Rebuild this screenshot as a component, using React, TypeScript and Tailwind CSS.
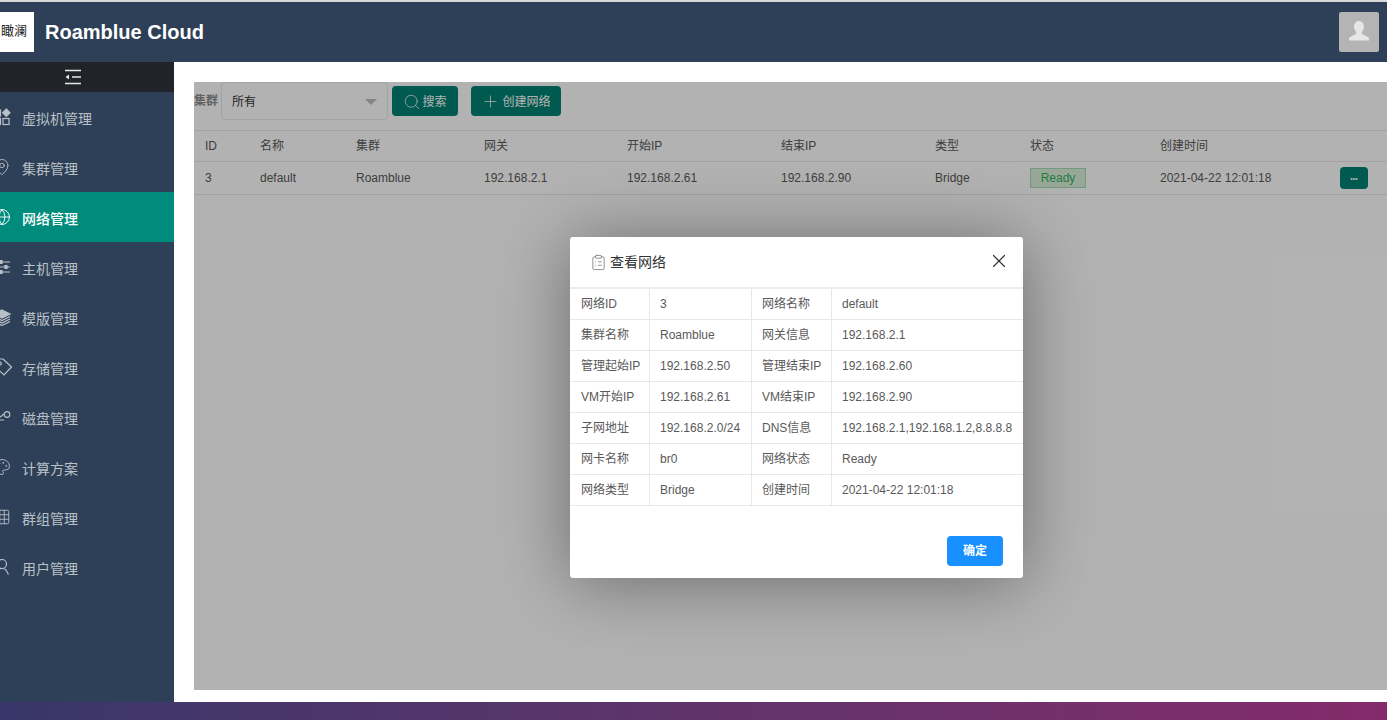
import { Globe, MapPin, Plus, Search, Palette, Grid3x3, X, ClipboardList } from "lucide-react";

const font = "font-['Liberation_Sans','Noto_Sans_CJK_SC',sans-serif]";

const AppsIcon = () => (
  <svg width="18" height="18" viewBox="0 0 18 18" fill="none" stroke="currentColor" strokeWidth="1.2">
    <rect x="1.500" y="2" width="6" height="6" />
    <rect x="1.500" y="10.500" width="6" height="6" />
    <rect x="10" y="10.500" width="6" height="6" />
    <path d="M13.300 1l3.700 3.700-3.700 3.700-3.700-3.700z" fill="currentColor" />
  </svg>
);

const HostIcon = () => (
  <svg width="18" height="18" viewBox="0 0 18 18" fill="none" stroke="currentColor" strokeWidth="1.2">
    <path d="M1 4h16M1 9h16M1 14h16" />
    <path d="M7 2.500h2v3H7zM12 7.500h2v3h-2zM7 12.500h2v3H7z" fill="currentColor" />
  </svg>
);

const DiskIcon = () => (
  <svg width="18" height="18" viewBox="0 0 18 18" fill="none" stroke="currentColor" strokeWidth="1.2">
    <path d="M1 6c2 0 3 3 5.500 3s2.500-2.500 4.500-3" />
    <circle cx="14" cy="6.500" r="2.800" />
    <path d="M1 12h3M7 12h4" />
  </svg>
);

const StackIcon = () => (
  <svg width="18" height="18" viewBox="0 0 18 18" fill="none" stroke="currentColor" strokeWidth="1.2">
    <path d="M9 2l8 4-8 4-8-4z" fill="currentColor" />
    <path d="M1 8.500l8 4 8-4M1 11l8 4 8-4M1 13.500l8 4 8-4" />
  </svg>
);

const TagIcon = () => (
  <svg width="18" height="18" viewBox="0 0 18 18" fill="none" stroke="currentColor" strokeWidth="1.2" className="overflow-visible">
    <path d="M10 1l8.500 8-7.500 8-9-8.500V1z" />
    <circle cx="7" cy="5.500" r="1.300" />
  </svg>
);

const UserIcon = () => (
  <svg width="18" height="18" viewBox="0 0 18 18" fill="none" stroke="currentColor" strokeWidth="1.2">
    <circle cx="9" cy="6" r="4.500" />
    <path d="M2 16c0-3 2.500-5.500 7-5.500 1.500 0 3 .5 4 1.500l2.500 4.500" />
  </svg>
);

const Icon = ({ name }: { name: string }) => {
  const props = { size: 18, strokeWidth: 1.2 };
  if (name === "apps") return <AppsIcon />;
  if (name === "pin") return <MapPin size={20} strokeWidth={1.2} />;
  if (name === "globe") return <Globe {...props} />;
  if (name === "host") return <HostIcon />;
  if (name === "layers") return <StackIcon />;
  if (name === "tag") return <TagIcon />;
  if (name === "disk") return <DiskIcon />;
  if (name === "palette") return <Palette {...props} />;
  if (name === "grid") return <Grid3x3 {...props} />;
  return <UserIcon />;
};

const menu = [
  { label: "虚拟机管理", icon: "apps" },
  { label: "集群管理", icon: "pin" },
  { label: "网络管理", icon: "globe", active: true },
  { label: "主机管理", icon: "host" },
  { label: "模版管理", icon: "layers" },
  { label: "存储管理", icon: "tag" },
  { label: "磁盘管理", icon: "disk" },
  { label: "计算方案", icon: "palette" },
  { label: "群组管理", icon: "grid" },
  { label: "用户管理", icon: "user" },
];

const headers = ["ID", "名称", "集群", "网关", "开始IP", "结束IP", "类型", "状态", "创建时间"];
const cols = "grid grid-cols-[55px_96px_128px_143px_154px_154px_95px_130px_1fr]";

const details = [
  ["网络ID", "3", "网络名称", "default"],
  ["集群名称", "Roamblue", "网关信息", "192.168.2.1"],
  ["管理起始IP", "192.168.2.50", "管理结束IP", "192.168.2.60"],
  ["VM开始IP", "192.168.2.61", "VM结束IP", "192.168.2.90"],
  ["子网地址", "192.168.2.0/24", "DNS信息", "192.168.2.1,192.168.1.2,8.8.8.8"],
  ["网卡名称", "br0", "网络状态", "Ready"],
  ["网络类型", "Bridge", "创建时间", "2021-04-22 12:01:18"],
];

const Sidebar = () => (
  <aside className="w-[174px] shrink-0 bg-[#2e4057] overflow-hidden">
    <div className="h-[30px] bg-[#222329] flex items-center justify-center pr-[28px]">
      <svg width="18" height="16" viewBox="0 0 18 16" fill="none" stroke="#e8e8e8" strokeWidth="1.5">
        <path d="M1 1.500h16M8 8h9M1 14.500h16" />
        <path d="M5 5.500v5L1.500 8z" fill="#e8e8e8" stroke="none" />
      </svg>
    </div>
    {menu.map((item) => (
      <div
        key={item.label}
        className={`h-[50px] pt-[3px] flex items-center text-sm ${item.active ? "bg-[#008c7c] text-white font-medium" : "text-[#b9c0c7]"}`}
      >
        <span className="w-[18px] ml-[-7px] mr-[11px] mb-[3px] flex justify-center">
          <Icon name={item.icon} />
        </span>
        {item.label}
      </div>
    ))}
  </aside>
);

const NetworkTable = () => (
  <div className="text-xs text-[#595959]">
    <div className={`${cols} h-[32px] items-center border-y border-[#e8e8e8] pb-px`}>
      {headers.map((h) => (
        <div key={h} className="pl-[11px]">{h}</div>
      ))}
    </div>
    <div className={`${cols} h-[33px] items-center border-b border-[#e8e8e8]`}>
      <div className="pl-[11px]">3</div>
      <div className="pl-[11px]">default</div>
      <div className="pl-[11px]">Roamblue</div>
      <div className="pl-[11px]">192.168.2.1</div>
      <div className="pl-[11px]">192.168.2.61</div>
      <div className="pl-[11px]">192.168.2.90</div>
      <div className="pl-[11px]">Bridge</div>
      <div className="pl-[11px]">
        <span className="inline-flex w-[56px] h-[20px] items-center justify-center bg-[#dcf0dc] border border-[#a5dcb8] text-[#2bb55c]">Ready</span>
      </div>
      <div className="pl-[11px] flex items-center justify-between pr-[19px]">
        <span>2021-04-22 12:01:18</span>
        <span className="w-[28px] h-[22px] rounded-sm bg-[#008272] text-white flex items-center justify-center text-[7px] leading-none">•••</span>
      </div>
    </div>
  </div>
);

const NetworkModal = () => (
  <div className="absolute left-[376px] top-[155px] w-[453px] h-[341px] bg-white rounded-[3px] shadow-[0_4px_70px_rgba(0,0,0,0.4)]">
    <div className="h-[50px] flex items-center pl-[20px] pr-[13px] text-sm text-[#333]">
      <ClipboardList size={17} strokeWidth={1} className="mr-[3px] text-[#666]" />
      <span>查看网络</span>
      <X size={22} strokeWidth={1.3} className="ml-auto mb-[3px]" />
    </div>
    <div className="border-t-2 border-[#ececec] text-xs text-[#595959]">
      {details.map((row) => (
        <div key={row[0]} className="grid grid-cols-[80px_102px_80px_191px] h-[31px] items-stretch border-b border-[#e8e8e8]">
          {row.map((cell, i) => (
            <div key={i} className={`flex items-center whitespace-nowrap pl-[10px] ${i < 3 ? "border-r border-[#e8e8e8]" : ""} ${i === 0 ? "pl-[11px]" : ""}`}>
              {cell}
            </div>
          ))}
        </div>
      ))}
    </div>
    <div className="flex justify-end pr-[20px] pt-[30px]">
      <button className="w-[56px] h-[30px] rounded-sm bg-[#1890ff] text-white text-xs font-bold">确定</button>
    </div>
  </div>
);

const App = () => {
  return (
    <div className={`${font} w-[1387px] h-[720px] overflow-hidden flex flex-col bg-white`}>
      <div className="h-[2px] bg-[#d9d9d9]" />
      <header className="h-[60px] shrink-0 bg-[#2e4057] flex items-center">
        <div className="w-[34px] h-[40px] bg-white flex flex-col items-start pl-px justify-center overflow-hidden">
          <span className="text-[13px] leading-[14px] text-[#222] whitespace-nowrap">瞰澜</span>
          <span className="text-[3px] leading-[3px] tracking-[1px] text-[#222]">.......</span>
        </div>
        <h1 className="ml-[11px] text-white text-[20px] font-bold">Roamblue Cloud</h1>
        <div className="ml-auto mr-[8px] w-[40px] h-[40px] bg-[#b4b4b4] rounded-[2px] flex items-center justify-center">
          <svg width="24" height="24" viewBox="0 0 24 24" fill="#e6e6e6">
            <path d="M12 1c3.200 0 5 2.500 5 5.500 0 2.300-1 4.300-2.200 5.500v1.500c0 1 4.700 2 7.200 4.500v2.500H2V18c2.500-2.500 7.200-3.500 7.200-4.500V12C8 10.800 7 8.800 7 6.500 7 3.500 8.800 1 12 1z" />
          </svg>
        </div>
      </header>
      <div className="flex h-[640px] shrink-0">
        <Sidebar />
        <main className="flex-1 pl-[20px] pt-[20px] pb-[12px]">
          <div className="relative h-[608px] bg-white">
            <div className="h-[48px] flex items-start">
              <span className="text-xs font-bold text-[#8c8c8c] w-[27px] mt-[11px] whitespace-nowrap">集群</span>
              <div className="w-[167px] h-[38px] border border-[#e8e8e8] rounded-sm flex items-center justify-between pl-[10px] pr-[10px] pt-[2px] text-xs text-[#333]">
                <span>所有</span>
                <span className="w-0 h-0 border-x-[6px] border-x-transparent border-t-[6px] border-t-[#bfbfbf]" />
              </div>
              <button className="ml-[4px] mt-[4px] w-[66px] h-[30px] pt-px rounded-sm bg-[#008272] text-white text-xs flex items-center justify-center gap-px">
                <Search size={18} strokeWidth={1} />搜索
              </button>
              <button className="ml-[13px] mt-[4px] w-[90px] h-[30px] pt-px rounded-sm bg-[#008272] text-white text-xs flex items-center justify-center gap-[2px]">
                <Plus size={19} strokeWidth={1} />创建网络
              </button>
            </div>
            <NetworkTable />
            <div className="absolute inset-0 bg-black/30" />
            <NetworkModal />
          </div>
        </main>
      </div>
      <div className="flex-1 bg-gradient-to-r from-[#38366a] to-[#842a6b]" />
    </div>
  );
};

export default App;
